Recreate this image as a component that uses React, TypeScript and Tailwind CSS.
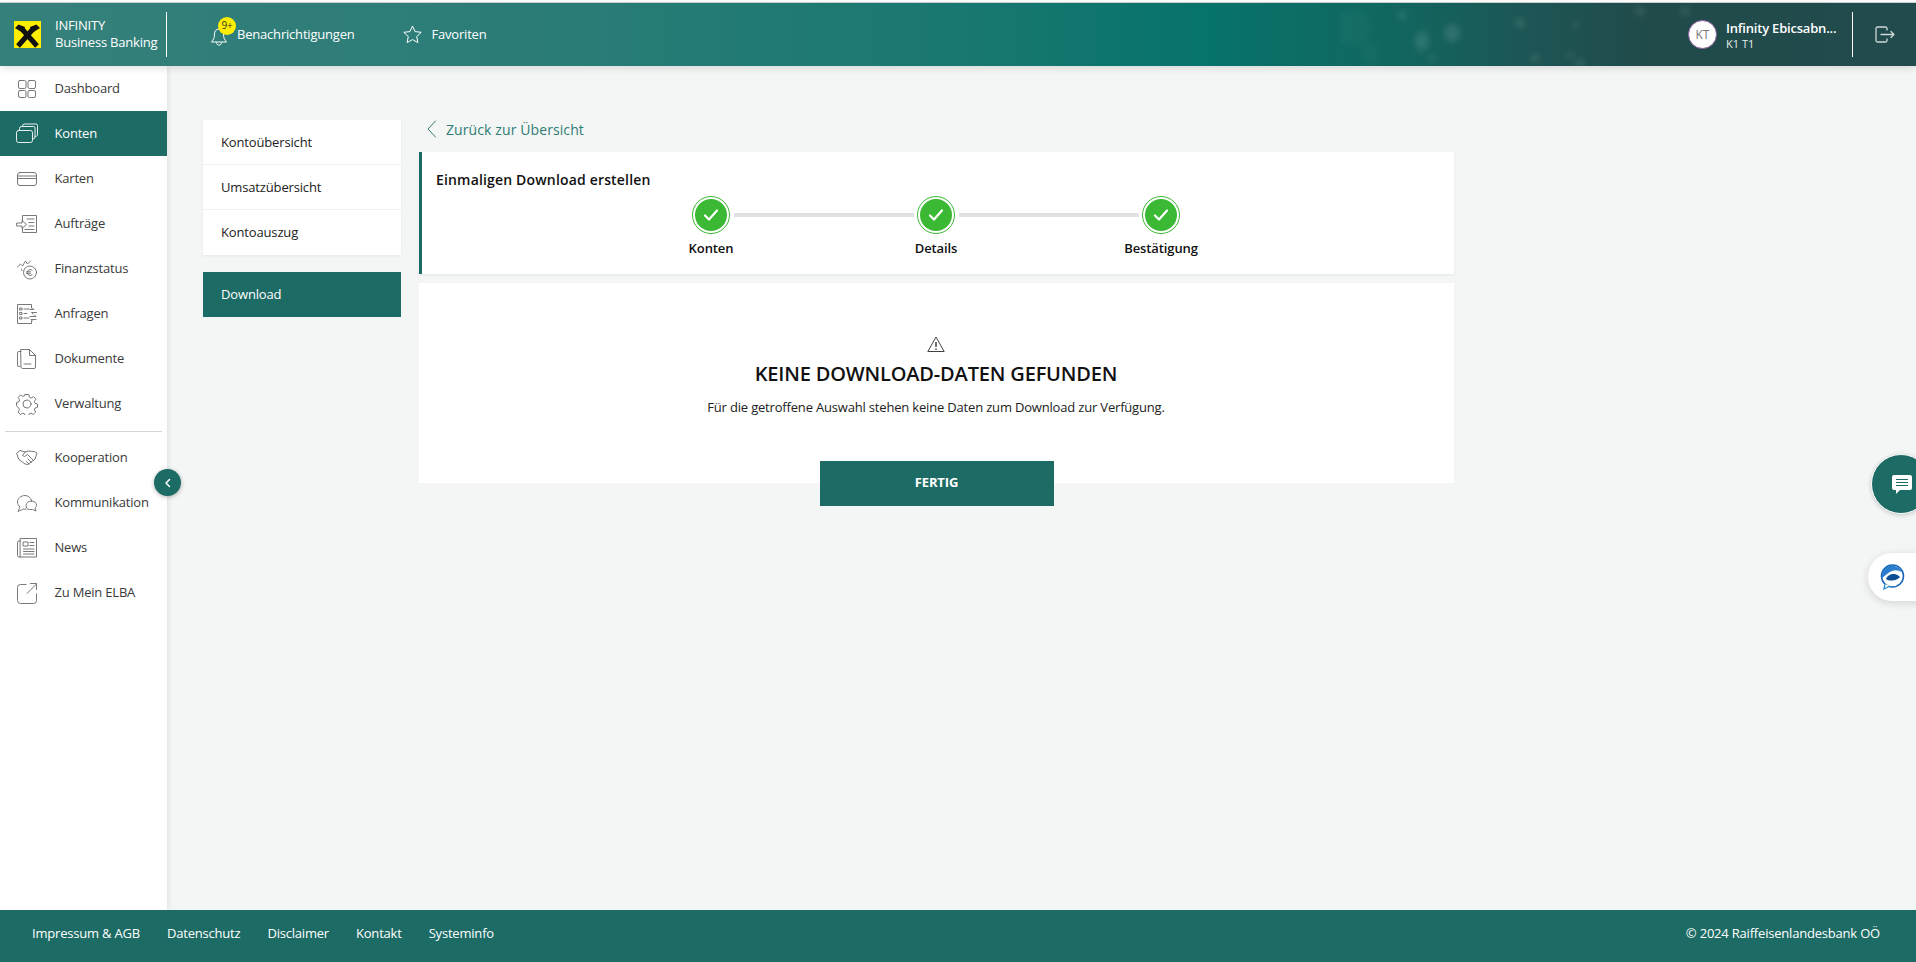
import { ReactNode } from "react";

const font = "font-['Open_Sans',sans-serif]";

const Ico = ({ children, w = 22, h = 22, vb = "0 0 22 22" }: { children: ReactNode; w?: number; h?: number; vb?: string }) => (
	<svg width={w} height={h} viewBox={vb} fill="none" stroke="currentColor" strokeWidth="0.9" strokeLinecap="round" strokeLinejoin="round">
		{children}
	</svg>
);

const navTop: { label: string; icon: ReactNode; active?: boolean }[] = [
	{
		label: "Dashboard",
		icon: (
			<Ico>
				<rect x="2.500" y="2.500" width="7.500" height="8" rx="1.500" />
				<rect x="12" y="2.500" width="7.500" height="8" rx="1.500" />
				<rect x="2.500" y="12.500" width="7.500" height="7" rx="1.500" />
				<rect x="12" y="12.500" width="7.500" height="7" rx="1.500" />
			</Ico>
		),
	},
	{
		label: "Konten",
		active: true,
		icon: (
			<Ico>
				<rect x="0.500" y="7.500" width="16" height="12" rx="2" />
				<path d="M3.500 7V5.500a2 2 0 0 1 2-2h12a1.500 1.500 0 0 1 1.500 1.500v9a2 2 0 0 1-2 2" />
				<path d="M6.500 3.500V3a2 2 0 0 1 2-2h11.500a1.500 1.500 0 0 1 1.500 1.500v9a2 2 0 0 1-2.500 2" />
			</Ico>
		),
	},
	{
		label: "Karten",
		icon: (
			<Ico>
				<rect x="1.500" y="4.500" width="19" height="13" rx="2.500" />
				<path d="M1.500 8h19M1.500 10.500h19" />
			</Ico>
		),
	},
	{
		label: "Aufträge",
		icon: (
			<Ico>
				<path d="M6.500 8V2.500h14v17h-14V15" />
				<path d="M1 10h5V7.500l4.500 4-4.500 4V13H1z" />
				<path d="M11 6h7M13 9.500h5M13 13h5M9 16.500h9" />
			</Ico>
		),
	},
	{
		label: "Finanzstatus",
		icon: (
			<Ico>
				<circle cx="14" cy="14.500" r="6.500" />
				<path d="M16 12a3 3 0 1 0 0 5M10.500 13.800h4M10.500 15.300h4" />
				<path d="M1.500 9l3-3 2 2 3-5 2 3 3-3M6 12.500l-.5-1.500" />
			</Ico>
		),
	},
	{
		label: "Anfragen",
		icon: (
			<Ico>
				<path d="M15.500 5V1.500h-14v19h14V18" />
				<path d="M4 5h2v2H4zM4 9.500h2v2H4zM4 14h2v2H4zM8 6h5M8 10.500h3M8 15h5" />
				<path d="M14 6.500h4l-1.500-1.500M20.500 9.500h-5l1.500 1.500M14 13.500h6l-1.500-1.500M20 16.500h-5l1.500 1.500" />
			</Ico>
		),
	},
	{
		label: "Dokumente",
		icon: (
			<Ico>
				<path d="M5 3.500H3a1.500 1.500 0 0 0-1.500 1.500v12A1.500 1.500 0 0 0 3 18.500h1" />
				<path d="M5 1.500h8.500l6 6v11.500a1.500 1.500 0 0 1-1.500 1.500H6.500A1.500 1.500 0 0 1 5 19z" />
				<path d="M13.500 1.500v6h6M8 16h7" />
			</Ico>
		),
	},
	{
		label: "Verwaltung",
		icon: (
			<Ico>
				<circle cx="11" cy="11" r="4" />
				<path d="M9.200 1.500h3.600l.6 2.700 1.700.8 2.400-1.400 2.400 2.600-1.500 2.300.6 1.800 2.500.8v3.200l-2.500.8-.7 1.800 1.400 2.200-2.500 2.400-2.300-1.400-1.800.8-.5 2.500H9.200l-.6-2.500-1.800-.8-2.300 1.400-2.500-2.400 1.400-2.200-.7-1.800L.5 12.700V9.500l2.500-.8.600-1.800-1.500-2.300 2.400-2.600 2.400 1.400 1.700-.8z" />
			</Ico>
		),
	},
];

const navBottom: { label: string; icon: ReactNode }[] = [
	{
		label: "Kooperation",
		icon: (
			<Ico>
				<path d="M1 6l3-2.500 5 1.500 3-1 6 .5 3 1.500-2 6-7 5.500-3-.5-6-4.500z" />
				<path d="M9 5L6.500 8.500l2 1 3-2 6 6M13 17l-2.500-2.500M15.500 15.500L12 12" />
			</Ico>
		),
	},
	{
		label: "Kommunikation",
		icon: (
			<Ico>
				<path d="M15.500 8.500C14.800 5.500 12 3.500 9 3.500c-4 0-7.500 2.800-7.500 6.500 0 2 1 3.700 2.500 5L2 19.500l5.500-2.500c.8.200 1.500.300 2.500.300" />
				<path d="M15.500 9c2.800 0 5 1.600 5 4 0 1.200-.6 2.200-1.500 3l1 3-3.500-1.500h-3c-2.500 0-3.500-2-3.500-4 0-2.500 2.500-4.500 5.500-4.500z" />
			</Ico>
		),
	},
	{
		label: "News",
		icon: (
			<Ico>
				<path d="M4.500 4H3a1.500 1.500 0 0 0-1.500 1.500v13A1.500 1.500 0 0 0 3 20h1.500" />
				<path d="M4.500 1.500h16v18.500h-16z" />
				<path d="M7.500 5h4.500v4H7.500zM14 5.500h4M14 8.500h4M7.500 12h10.500M7.500 14.500h10.500M7.500 17h10.500" />
			</Ico>
		),
	},
	{
		label: "Zu Mein ELBA",
		icon: (
			<Ico>
				<path d="M10 2.500H4.500a3 3 0 0 0-3 3v13a3 3 0 0 0 3 3h13a3 3 0 0 0 3-3V12" />
				<path d="M11 11.500L20.500 2M14.500 1.500h6v6" />
			</Ico>
		),
	},
];

const NavRow = ({ label, icon, active }: { label: string; icon: ReactNode; active?: boolean }) => (
	<div className={`flex h-[45px] items-center text-[13px] tracking-[-0.2px] ${active ? "bg-[#1d6b65] font-medium text-white" : "text-[#3a3a3a]"}`}>
		<span className={`flex w-[54.500px] shrink-0 justify-center ${active ? "text-white" : "text-[#6a6a6a]"}`}>{icon}</span>
		<span>{label}</span>
	</div>
);

const Step = ({ label }: { label: string }) => (
	<div className="flex w-[45px] flex-col items-center">
		<div className="flex h-[38px] w-[38px] items-center justify-center rounded-full border border-[#3cb934] bg-white">
			<div className="flex h-[32px] w-[32px] items-center justify-center rounded-full bg-[#3cb934]">
				<svg width="16" height="14" viewBox="0 0 16 14" fill="none" stroke="white" strokeWidth="2.200" strokeLinecap="round" strokeLinejoin="round">
					<path d="M2 7.500l4 4 8-9" />
				</svg>
			</div>
		</div>
		<span className="mt-[5px] whitespace-nowrap text-[13px] leading-[18px] font-semibold tracking-[-0.1px] text-[#111]">{label}</span>
	</div>
);

export default function App() {
	return (
		<div className={`${font} relative flex h-[962px] w-[1916px] flex-col overflow-hidden bg-[#f4f6f5]`}>
			<div className="h-[3px] shrink-0 border-b border-[#cfd6d4] bg-white" />
			{/* top bar */}
			<header className="relative z-20 flex h-[63px] shrink-0 items-center overflow-hidden bg-[linear-gradient(90deg,#35807b_0%,#2a7c77_30%,#197871_50%,#07736b_63%,#11665f_73%,#1d5554_80%,#214b4b_86%,#214b4c_100%)] text-white shadow-[0_2px_8px_rgba(0,0,0,0.12)]">
				<svg className="absolute top-0 left-[1340px]" width="480" height="63" fill="#fff" opacity="0.11">
					<defs>
						<filter id="b">
							<feGaussianBlur stdDeviation="3" />
						</filter>
					</defs>
					<g filter="url(#b)">
						<ellipse cx="10" cy="25" rx="22" ry="18" opacity="0.25" />
						<ellipse cx="82" cy="38" rx="7" ry="10" />
						<ellipse cx="112" cy="30" rx="8" ry="9" />
						<circle cx="62" cy="12" r="4" />
						<circle cx="92" cy="55" r="3" />
						<circle cx="180" cy="20" r="5" />
						<circle cx="235" cy="22" r="3" />
						<circle cx="195" cy="55" r="4" />
						<circle cx="230" cy="52" r="3" />
						<circle cx="300" cy="8" r="4" />
						<circle cx="345" cy="8" r="4" />
						<circle cx="240" cy="60" r="4" />
						<circle cx="30" cy="50" r="10" opacity="0.25" />
					</g>
				</svg>
				<div className="relative flex h-full w-[167px] shrink-0 items-center pl-[14px]">
					<svg width="27" height="27" viewBox="0 0 27 27">
						<rect width="27" height="27" fill="#ffee00" />
						<path d="M8 8L23 25M19 8L4 25" stroke="#111" strokeWidth="5" fill="none" />
						<path d="M1 7l3.500-3.500L11 6 9 12zM26 7l-3.500-3.500L16 6l2 6z" fill="#111" />
					</svg>
					<div className="-mt-[2px] ml-[14px] text-[13px] leading-[17px] tracking-[-0.2px] whitespace-nowrap">
						<div>INFINITY</div>
						<div>Business Banking</div>
					</div>
					<div className="absolute top-[9px] right-0 h-[45px] w-px bg-white" />
				</div>
				<div className="relative flex items-center pl-[44px] text-[13px] tracking-[-0.2px]">
					<div className="relative mr-[10px] flex h-[20px] w-[16px] translate-y-[2px] items-center justify-center">
						<svg width="16" height="19" viewBox="0 0 16 19" fill="none" stroke="white" strokeWidth="1" strokeLinejoin="round">
							<path d="M8 2c-3 0-4.500 2.500-4.500 5 0 4-1 5.500-3 8h15c-2-2.500-3-4-3-8 0-2.500-1.500-5-4.500-5z" />
							<path d="M5.500 15.500c0 3.500 5 3.500 5 0" />
						</svg>
						<span className="absolute top-[-10px] left-[7px] flex h-[18px] w-[18px] items-center justify-center rounded-full bg-[#ffee00] text-[10px] text-[#333]">9+</span>
					</div>
					<span>Benachrichtigungen</span>
					<span className="mr-[10px] ml-[48px] flex">
						<svg width="19" height="19" viewBox="0 0 19 19" fill="none" stroke="white" strokeWidth="1" strokeLinejoin="round">
							<path d="M9.500 1l2.600 5.600 6.100.7-4.500 4.200 1.200 6.100-5.400-3-5.400 3 1.200-6.100L.8 7.300l6.100-.7z" />
						</svg>
					</span>
					<span>Favoriten</span>
				</div>
				<div className="relative ml-auto flex h-full items-center">
					<div className="flex h-[29px] w-[29px] items-center justify-center rounded-full border border-[#8a5a9c] bg-white text-[12px] text-[#777]">KT</div>
					<div className="ml-[9px] w-[126px]">
						<div className="text-[13px] leading-[18px] font-semibold tracking-[-0.2px] whitespace-nowrap">Infinity Ebicsabn...</div>
						<div className="-mt-[1px] text-[11px] leading-[15px] font-medium text-[#e8eeee]">K1 T1</div>
					</div>
					<div className="h-[45px] w-px bg-white" />
					<div className="flex w-[63px] justify-center pl-[1px] text-[#cfd8d7]">
						<svg width="20" height="17" viewBox="0 0 20 17" fill="none" stroke="currentColor" strokeWidth="1.300" strokeLinecap="round" strokeLinejoin="round">
							<path d="M12 4V2.500A1.500 1.500 0 0 0 10.500 1H2.500A1.500 1.500 0 0 0 1 2.500v12A1.500 1.500 0 0 0 2.500 16h8a1.500 1.500 0 0 0 1.500-1.500V13" />
							<path d="M6 8.500h13M16 5.500l3 3-3 3" />
						</svg>
					</div>
				</div>
			</header>

			<div className="relative flex min-h-0 flex-1">
				{/* sidebar */}
				<aside className="relative z-10 w-[167px] shrink-0 bg-white shadow-[2px_0_4px_rgba(0,0,0,0.07)]">
					{navTop.map((n) => (
						<NavRow key={n.label} {...n} />
					))}
					<div className="mx-[5px] mt-[5px] mb-[3px] h-px bg-[#d5d5d5]" />
					{navBottom.map((n) => (
						<NavRow key={n.label} {...n} />
					))}
					<div className="absolute top-[403px] -right-[14px] flex h-[27px] w-[27px] items-center justify-center rounded-full bg-[#1d6b65] shadow-[0_1px_4px_rgba(0,0,0,0.3)]">
						<svg width="8" height="10" viewBox="0 0 8 10" fill="none" stroke="white" strokeWidth="1.500" strokeLinecap="round" strokeLinejoin="round">
							<path d="M5.500 1.500L2 5l3.500 3.500" />
						</svg>
					</div>
				</aside>

				<main className="flex min-w-0 flex-1 items-start pt-[54px] pl-[36px]">
					{/* sub navigation */}
					<div className="w-[198px] shrink-0 text-[13px] tracking-[-0.15px] text-[#222]">
						<div className="bg-white shadow-[0_1px_3px_rgba(0,0,0,0.06)]">
							<div className="flex h-[45px] items-center border-b border-[#f0f2f1] pt-[2px] pl-[18px]">Kontoübersicht</div>
							<div className="flex h-[45px] items-center border-b border-[#f0f2f1] pt-[2px] pl-[18px]">Umsatzübersicht</div>
							<div className="flex h-[45px] items-center pl-[18px]">Kontoauszug</div>
						</div>
						<div className="mt-[17px] flex h-[45px] items-center bg-[#1d6b65] pl-[18px] text-white">Download</div>
					</div>

					<div className="ml-[18px] w-[1035px]">
						<div className="flex h-[32px] items-start pl-[8px] text-[14px] leading-[19px] tracking-[0.1px] text-[#2f7c75]">
							<svg className="shrink-0" width="10" height="18" viewBox="0 0 10 18" fill="none" stroke="currentColor" strokeWidth="1" strokeLinecap="round" strokeLinejoin="round">
								<path d="M8.500 1L1 9l7.500 8" />
							</svg>
							<span className="ml-[9px]">Zurück zur Übersicht</span>
						</div>
						<section className="h-[122px] border-l-[3px] border-[#1d6b65] bg-white pt-[18px] shadow-[0_1px_3px_rgba(0,0,0,0.06)]">
							<h2 className="pl-[14px] text-[14px] leading-[19px] font-semibold tracking-[0.17px] text-[#111]">Einmaligen Download erstellen</h2>
							<div className="-ml-[4px] flex justify-center pt-[7px]">
								<Step label="Konten" />
								<div className="mt-[17px] h-[4px] w-[180px] bg-[#e1e1e1]" />
								<Step label="Details" />
								<div className="mt-[17px] h-[4px] w-[180px] bg-[#e1e1e1]" />
								<Step label="Bestätigung" />
							</div>
						</section>
						<section className="mt-[9px] flex h-[200px] flex-col items-center bg-white pt-[53px] pr-[1px]">
							<svg className="shrink-0" width="18" height="17" viewBox="0 0 18 17" fill="none" stroke="#444" strokeWidth="1" strokeLinejoin="round">
								<path d="M9 1L.8 15.500h16.400z" />
								<path d="M9 6v5M9 12.500v1.500" strokeWidth="1.500" />
							</svg>
							<h1 className="mt-[7px] shrink-0 text-[20px] leading-[27px] font-semibold tracking-[-0.17px] text-[#111]">KEINE DOWNLOAD-DATEN GEFUNDEN</h1>
							<p className="mt-[11px] shrink-0 text-[13px] leading-[18px] tracking-[-0.18px] text-[#222]">Für die getroffene Auswahl stehen keine Daten zum Download zur Verfügung.</p>
							<button className="mt-[45px] ml-[1px] h-[45px] w-[234px] shrink-0 bg-[#1d6b65] pb-[2px] text-[13px] font-bold tracking-[-0.1px] text-white">FERTIG</button>
						</section>
					</div>
				</main>
			</div>

			{/* floating buttons */}
			<div className="absolute top-[454px] left-[1871px] flex h-[60px] w-[60px] items-center rounded-full border border-white bg-[#1d6b65] pl-[20px] shadow-[0_1px_4px_rgba(0,0,0,0.2)]">
				<svg width="20" height="19" viewBox="0 0 20 19">
					<path d="M2 0h16a2 2 0 0 1 2 2v11a2 2 0 0 1-2 2H8l-4 4v-4H2a2 2 0 0 1-2-2V2a2 2 0 0 1 2-2z" fill="white" />
					<path d="M4 4.500h12M4 7.500h12M4 10.500h12" stroke="#1d6b65" strokeWidth="1" />
				</svg>
			</div>
			<div className="absolute top-[553px] left-[1868px] flex h-[48px] w-[60px] items-center rounded-l-[24px] bg-white pl-[12px] shadow-[0_2px_8px_rgba(0,0,0,0.14)]">
				<svg width="25" height="26" viewBox="0 0 25 26">
					<circle cx="12.500" cy="12" r="11" fill="white" stroke="#1565b8" strokeWidth="1.500" />
					<path d="M2 14C1 7 6 2 11 1.500c4 0 9 2 11 7-3-2.500-7-3-10-1.500-3 1-6 4-10 7z" fill="#2a7dcc" />
					<path d="M6 15c1-3 4-5 8-5 2 0 4 1 6 3-2 3-10 5-14 2z" fill="#0d4f94" />
					<path d="M5 20l-1 5 6-3" fill="white" stroke="#2a8ddc" strokeWidth="1.300" />
				</svg>
			</div>

			<footer className="relative z-20 flex h-[52px] shrink-0 items-center bg-[#1d6b65] pr-[36px] pb-[4px] pl-[32px] text-[13px] tracking-[-0.2px] text-white">
				<div className="flex gap-[27px]">
					<span>Impressum &amp; AGB</span>
					<span>Datenschutz</span>
					<span>Disclaimer</span>
					<span>Kontakt</span>
					<span>Systeminfo</span>
				</div>
				<span className="ml-auto">© 2024 Raiffeisenlandesbank OÖ</span>
			</footer>
		</div>
	);
}
